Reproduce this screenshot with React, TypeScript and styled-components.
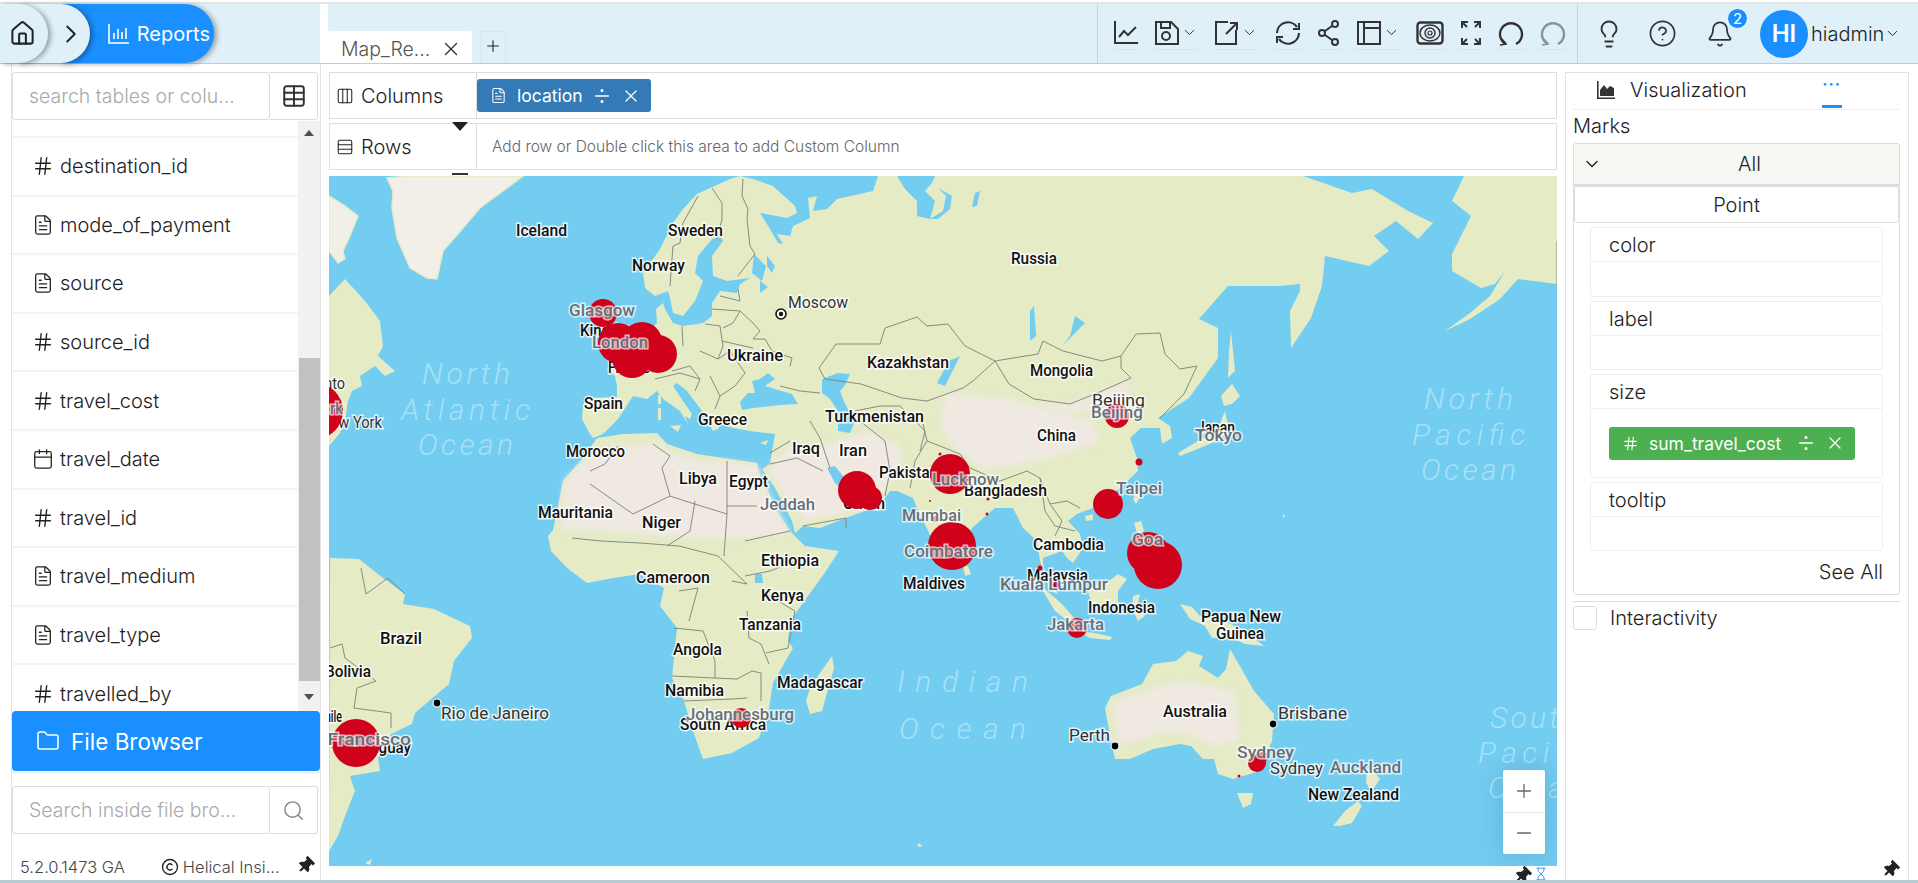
import React from "react";
import styled, { createGlobalStyle } from "styled-components";
import {
  Bell,
  Calendar,
  ChevronDown,
  ChevronRight,
  CircleHelp,
  Columns3,
  Copyright,
  Divide,
  FileText,
  Folder,
  Hash,
  Hourglass,
  House,
  Lightbulb,
  Minus,
  Plus,
  Rows3,
  Search,
  Table,
  X,
} from "lucide-react";
import { FaThumbtack } from "react-icons/fa";

const FONT = `Inter, "Open Sans", "Liberation Sans", sans-serif`;

const fields = [
  { name: "destination_id", kind: "hash" },
  { name: "mode_of_payment", kind: "file" },
  { name: "source", kind: "file" },
  { name: "source_id", kind: "hash" },
  { name: "travel_cost", kind: "hash" },
  { name: "travel_date", kind: "date" },
  { name: "travel_id", kind: "hash" },
  { name: "travel_medium", kind: "file" },
  { name: "travel_type", kind: "file" },
  { name: "travelled_by", kind: "hash" },
];

// map geometry, in page pixels (the svg viewBox starts at the map's corner)
const LAND = [
  // eurasia
  "590,433 582,418 583,405 587,397 617,396 617,385 615,375 607,367 625,362 640,340 650,328 657,322 656,308 663,302 668,290 655,295 645,287 643,272 660,248 673,222 683,208 697,193 710,187 730,178 740,175 753,178 773,185 795,205 797,212 787,217 760,212 770,228 778,242 783,243 777,233 790,235 793,225 810,217 808,197 817,195 813,210 827,208 837,198 873,190 878,175 1303,175 1352,192 1372,188 1408,210 1433,222 1418,238 1396,220 1374,235 1389,250 1369,265 1325,255 1322,285 1311,317 1291,347 1290,310 1300,290 1300,283 1279,285 1228,285 1199,318 1218,327 1218,357 1189,397 1158,417 1170,425 1172,437 1162,443 1160,427 1141,427 1130,437 1137,457 1138,470 1120,487 1093,507 1077,513 1068,520 1080,533 1083,547 1073,562 1067,557 1062,550 1043,557 1043,563 1047,577 1058,593 1050,590 1040,560 1037,540 1023,527 1013,507 995,507 972,527 958,560 950,567 933,540 917,507 913,497 897,490 890,490 883,500 873,507 843,518 820,527 803,525 795,532 792,520 775,487 762,468 770,463 772,450 775,433 750,430 733,427 720,423 718,428 713,430 702,410 687,390 677,382 673,385 683,400 692,413 690,418 685,415 688,423 680,410 663,398 657,390 647,398 633,395 618,418 603,433 593,437",
  // africa
  "563,480 583,457 597,437 623,433 657,432 667,443 697,453 723,457 757,462 760,475 768,490 780,515 790,530 805,545 839,550 824,573 803,602 790,620 788,640 793,647 773,682 769,707 759,737 732,752 703,758 693,730 684,700 672,677 674,657 677,627 660,605 664,587 640,573 613,577 587,582 567,567 551,550 548,535 553,529",
  // south america
  "330,557 359,558 383,577 405,593 403,603 434,608 470,625 472,637 454,660 449,683 415,712 412,723 391,733 378,757 380,770 350,775 355,790 345,815 338,835 329,850",
  // north america
  "329,295 345,278 365,300 380,320 383,345 378,355 395,370 385,375 375,365 360,375 362,385 352,390 348,400 345,420 340,432 329,445",
  // alaska
  "1464,175 1452,200 1471,215 1452,253 1452,270 1481,287 1495,283 1505,270 1490,295 1470,312 1445,330 1470,318 1500,298 1518,278 1557,283 1557,175",
  // madagascar
  "832,655 834,667 822,710 810,713 806,700 810,687 820,672",
  // japan, sakhalin
  "1221,395 1232,383 1240,395 1232,403 1224,405",
  "1225,410 1228,425 1222,438 1200,447 1180,455 1178,452 1198,440 1217,430",
  "1231,330 1235,370 1228,377 1229,350",
  // taiwan, hainan, sri lanka, luzon
  "1137,490 1141,494 1136,503 1133,498",
  "1085,515 1093,513 1093,519 1086,520",
  "963,565 968,565 971,573 965,575",
  "1134,522 1141,520 1144,530 1138,535",
  // sumatra, java, borneo, sulawesi
  "1040,585 1047,590 1062,603 1075,618 1070,622 1055,610",
  "1078,630 1095,632 1112,636 1110,639 1090,637",
  "1087,588 1105,583 1118,573 1127,578 1118,590 1118,603 1105,606 1092,603",
  "1133,595 1140,593 1137,605 1145,615 1138,620 1132,608",
  // papua
  "1180,603 1192,606 1200,615 1225,620 1245,630 1264,645 1245,643 1230,636 1212,637 1205,625 1190,618",
  // australia
  "1230,648 1241,667 1254,690 1274,713 1272,740 1260,770 1233,778 1218,773 1214,758 1203,758 1191,745 1180,743 1153,748 1130,758 1115,758 1111,740 1105,707 1111,695 1142,683 1153,663 1176,660 1188,650 1203,655 1199,665 1218,677 1226,668",
  "1237,792 1253,792 1251,803 1243,807",
  // new zealand
  "1367,767 1375,772 1380,778 1372,790 1366,782",
  "1333,825 1345,810 1358,800 1362,805 1352,822 1340,825",
  // islands
  "658,407 661,407 661,419 658,419",
  "658,394 661,394 661,403 658,403",
  "670,425 681,424 678,431",
  "760,442 768,439 766,444",
  "365,862 372,858 370,864",
  "918,842 923,845 918,846",
  "1283,513 1285,515 1283,517",
];

const ICY = [
  "410,175 523,175 503,190 480,207 463,227 443,250 437,278 427,277 410,267 397,237 392,207 393,190 387,177",
  "329,195 345,205 358,215 350,235 343,250 345,258 338,262 329,250",
  "1495,175 1557,175 1557,235 1530,215 1510,190",
];

const ARID = [
  "565,478 595,450 625,445 660,442 668,450 697,460 723,460 757,464 770,495 790,532 740,538 660,535 600,530 560,530",
  "775,458 790,445 815,448 835,440 870,430 900,445 900,470 888,487 843,513 805,520 782,490 768,470",
  "946,392 1010,398 1065,412 1095,422 1098,442 1040,460 985,468 957,450 940,425",
  "1113,700 1145,690 1180,680 1235,690 1240,740 1215,745 1180,730 1150,735 1118,745",
  "1038,398 1070,403 1102,390 1125,380 1130,392 1100,408 1060,412",
];

const SEA = [
  // baltic
  "668,290 670,297 673,312 683,315 695,300 703,280 695,272 698,255 712,238 720,235 723,240 712,255 713,275 727,280 750,277 740,283 737,292 720,290 712,302 712,315 703,322 683,325 673,322 665,308 663,302",
  // black sea, azov
  "740,401 748,392 755,392 752,380 760,378 768,372 775,378 765,385 775,388 792,393 798,403 780,404 753,407 742,409",
  // caspian
  "822,392 822,378 838,372 850,373 845,384 840,390 845,403 855,420 850,432 838,430 838,410 830,398",
  // persian gulf
  "827,467 835,465 847,480 845,490 835,482",
  // kara sea, ob
  "897,175 905,188 917,200 917,215 930,218 935,200 925,190 932,182 935,175",
  "938,187 946,195 943,210 930,218 938,218 950,208 952,195",
  "975,192 980,190 977,205 972,206",
  // lakes
  "754,253 766,265 762,280 752,272",
  "767,255 775,265 772,272 767,265",
  "1030,310 1034,305 1036,335 1030,340",
  "1075,315 1085,322 1062,345 1070,335",
  "760,280 768,286 760,292",
  "949,360 960,355 945,385 937,382",
  "755,573 762,573 763,582 755,582",
];

const BORDERS = [
  // europe
  "743,178 742,195 748,208 747,218 750,245 755,253 738,275",
  "712,187 722,202 722,218 717,238",
  "698,195 683,222 680,242 673,245 670,285",
  "682,325 683,345",
  "705,323 720,325 723,345 718,358",
  "712,308 740,310 753,322 760,330 753,338 765,338 772,350 792,357 790,365",
  "722,340 753,347",
  "740,310 733,322 723,327",
  "720,295 740,300 738,288",
  "700,350 718,358 730,350 745,372 735,385 720,395 715,408",
  "672,370 690,365 700,378 695,390",
  "655,378 680,372 700,378",
  "710,375 720,395",
  // russia / kazakhstan / mongolia
  "819,367 836,343 880,343 885,327 917,316 927,325 948,323 965,345 995,360",
  "995,360 1038,353 1043,340 1063,350 1102,360 1121,355 1136,333 1160,332 1165,353 1180,368 1197,365 1184,393 1160,417",
  "995,360 1009,383 1034,398 1070,403 1102,390 1131,377 1121,367 1121,355",
  "819,367 825,378 861,383 902,397 927,400 963,387 973,380 995,360",
  "780,385 800,390 820,392",
  "855,410 880,405 900,405 925,430 920,450",
  "860,420 885,440 890,470 885,495",
  "810,420 820,437 830,467",
  "790,440 770,452",
  "770,463 797,457 823,470",
  "803,525 846,517 846,527",
  "960,453 970,467 1000,480 1027,470 1040,477 1050,503 1067,500 1080,507",
  "923,423 927,440 915,460 910,487",
  "927,440 945,447 960,453",
  "1040,477 1045,510 1055,525 1075,530",
  "1050,503 1062,520 1055,535",
  // africa
  "653,443 670,455 662,467 670,495 685,500 727,513 727,460",
  "727,505 757,505",
  "670,495 633,513 590,483",
  "590,470 605,463 618,445",
  "727,513 724,555",
  "695,500 690,530 667,545",
  "572,537 601,540 640,542 679,545 718,555 747,583 732,580",
  "679,590 698,587 689,620",
  "674,627 703,630 715,660 715,677 672,675",
  "715,677 737,678 752,670 761,672 761,700",
  "747,610 749,637 761,643 769,663",
  "761,590 795,610 788,647 766,652",
  "684,700 732,698 747,697",
  "745,540 790,530",
  "745,575 770,570 795,560",
  // south america
  "330,647 342,643 345,657 376,680 357,687 354,707 391,712 391,727",
  "361,567 366,593 388,577 405,593",
  "1557,240 1557,285",
];

type Label = [string, number, number, number];

const COUNTRY: Label[] = [
  ["Iceland", 516, 567, 235],
  ["Sweden", 668, 723, 235],
  ["Norway", 632, 685, 270],
  ["Kingdom", 580, 640, 335],
  ["France", 608, 650, 372],
  ["Spain", 584, 623, 408],
  ["Morocco", 566, 625, 456],
  ["Libya", 679, 717, 483],
  ["Egypt", 729, 768, 486],
  ["Mauritania", 538, 613, 517],
  ["Niger", 642, 681, 527],
  ["Ukraine", 727, 783, 360],
  ["Greece", 698, 747, 424],
  ["Iraq", 792, 820, 453],
  ["Russia", 1011, 1057, 263],
  ["Kazakhstan", 867, 949, 367],
  ["Mongolia", 1030, 1093, 375],
  ["Turkmenistan", 825, 924, 421],
  ["China", 1037, 1076, 440],
  ["Iran", 839, 867, 455],
  ["Pakistan", 879, 938, 477],
  ["Bangladesh", 964, 1047, 495],
  ["Oman", 843, 885, 508],
  ["Cambodia", 1033, 1104, 549],
  ["Malaysia", 1027, 1088, 580],
  ["Maldives", 903, 965, 588],
  ["Indonesia", 1088, 1155, 612],
  ["Papua New", 1201, 1281, 621],
  ["Guinea", 1216, 1264, 638],
  ["Australia", 1163, 1227, 716],
  ["New Zealand", 1308, 1399, 799],
  ["Ethiopia", 761, 819, 565],
  ["Cameroon", 636, 710, 582],
  ["Kenya", 761, 804, 600],
  ["Tanzania", 739, 801, 629],
  ["Angola", 673, 722, 654],
  ["Namibia", 665, 724, 695],
  ["South Africa", 680, 766, 729],
  ["Madagascar", 777, 863, 687],
  ["Brazil", 380, 422, 643],
  ["Bolivia", 325, 371, 676],
  ["Uruguay", 355, 411, 752],
  ["Chile", 318, 342, 721],
  ["Japan", 1197, 1235, 432],
];

const CITY: Label[] = [
  ["Moscow", 788, 848, 307],
  ["Rio de Janeiro", 441, 549, 718],
  ["Perth", 1069, 1110, 740],
  ["Brisbane", 1278, 1347, 718],
  ["Sydney", 1270, 1323, 773],
  ["Beijing", 1092, 1145, 405],
  ["New York", 320, 382, 427],
  ["Toronto", 295, 345, 388],
];

const SPOT: Label[] = [
  ["Glasgow", 569, 635, 315],
  ["London", 592, 648, 347],
  ["Jeddah", 760, 815, 509],
  ["Lucknow", 932, 999, 484],
  ["Mumbai", 902, 961, 520],
  ["Coimbatore", 904, 993, 556],
  ["Beijing", 1091, 1143, 417],
  ["Taipei", 1116, 1162, 493],
  ["Tokyo", 1195, 1242, 440],
  ["Goa", 1132, 1163, 544],
  ["Kuala Lumpur", 1000, 1108, 589],
  ["Jakarta", 1047, 1104, 629],
  ["Johannesburg", 686, 794, 719],
  ["San Francisco", 290, 411, 744],
  ["Sydney", 1237, 1294, 757],
  ["Auckland", 1330, 1401, 772],
  ["New York", 280, 343, 413],
];

const OCEAN: Label[] = [
  ["North", 422, 510, 383],
  ["Atlantic", 401, 530, 419],
  ["Ocean", 418, 513, 454],
  ["North", 1424, 1513, 408],
  ["Pacific", 1412, 1525, 444],
  ["Ocean", 1421, 1516, 479],
  ["Indian", 897, 1028, 691],
  ["Ocean", 899, 1026, 738],
  ["South", 1490, 1578, 727],
  ["Pacific", 1478, 1591, 762],
  ["Ocean", 1488, 1583, 797],
];

const BUBBLES = [
  [315, 410, 28], [603, 312, 14], [618, 342, 20], [642, 341, 20], [632, 357, 20], [658, 353, 19],
  [857, 489, 19], [870, 497, 12], [950, 473, 20], [952, 545, 24], [1108, 503, 15],
  [1148, 552, 21], [1158, 564, 24], [1117, 415, 12], [1139, 461, 3.5], [1077, 627, 10],
  [741, 717, 10], [356, 742, 24], [1257, 762, 9], [1263, 756, 5], [940, 453, 1.5], [930, 500, 1],
  [988, 498, 1.5], [987, 513, 1.5], [1040, 567, 2.5], [1056, 584, 3], [1239, 775, 1.5], [935, 518, 3],
];

const DOTS = [[437, 702], [1115, 745], [1273, 723]];

const GlobalStyle = createGlobalStyle`
  html, body {
    margin: 0;
    padding: 0;
    background: #fff;
  }
  body {
    font-family: ${FONT};
    font-weight: 300;
    color: #222;
  }
  * {
    box-sizing: border-box;
  }
`;

const Page = styled.div`
  width: 1918px;
  height: 883px;
  overflow: hidden;
  display: flex;
  flex-direction: column;
  background: #fff;
  padding-top: 2px;
`;

const TopBar = styled.header`
  height: 62px;
  flex: none;
  display: flex;
  border-top: 2px solid #e4e4e4;
  border-bottom: 1px solid #c4ccd0;
`;

const CrumbArea = styled.div`
  width: 320px;
  background: #e0f0f9;
  display: flex;
`;

const Crumb = styled.div<{ $w: number; $blue?: boolean; $layer: number; $first?: boolean }>`
  width: ${(p) => p.$w}px;
  margin-left: ${(p) => (p.$first ? 0 : -30)}px;
  z-index: ${(p) => p.$layer};
  display: flex;
  align-items: center;
  justify-content: ${(p) => (p.$first ? "center" : "flex-end")};
  gap: 7px;
  padding-right: ${(p) => (p.$blue ? 4 : p.$first ? 3 : 4)}px;
  border-radius: 0 30px 30px 0;
  color: ${(p) => (p.$blue ? "#fff" : "#222")};
  background: ${(p) => (p.$blue ? "#1a8fff" : "#e0f0f9")};
  box-shadow: 3px 1px 5px rgba(0, 0, 0, 0.32);
  font-size: 20px;
  font-weight: 400;
`;

const TabArea = styled.div`
  flex: 1;
  margin-left: 8px;
  background: #e0f0f9;
  display: flex;
  align-items: flex-end;
`;

const Tab = styled.div`
  width: 144px;
  height: 32px;
  background: #fff;
  border-radius: 3px 3px 0 0;
  display: flex;
  align-items: center;
  justify-content: space-between;
  padding: 3px 10px 0 13px;
  font-size: 19.5px;
  color: #555;
  white-space: nowrap;
`;

const AddTab = styled.div`
  width: 26px;
  height: 32px;
  margin-left: 8px;
  border: 1px solid #d9e9f2;
  border-bottom: 0;
  display: flex;
  justify-content: center;
  padding-top: 5px;
  color: #222;
`;

const Tools = styled.div`
  width: 481px;
  flex: none;
  background: #e0f0f9;
  display: flex;
  align-items: center;
  gap: 16px;
  padding: 0 0 2px 16px;
  border-left: 1px solid #c4d2da;
  border-right: 1px solid #c4d2da;
`;

const ToolButton = styled.div<{ $w: number }>`
  width: ${(p) => p.$w}px;
  height: 30px;
  flex: none;
  display: flex;
  align-items: center;
  gap: 1px;
  color: #333;
  border-bottom: 1px solid #d8e2e8;
  padding-bottom: 3px;
  margin-top: 4px;
`;

const UserArea = styled.div`
  flex: none;
  width: 340px;
  background: #e0f0f9;
  display: flex;
  align-items: center;
  padding-left: 16px;
  color: #333;
`;

const UserIcon = styled.div<{ $right: number }>`
  position: relative;
  display: flex;
  margin-right: ${(p) => p.$right}px;
`;

const Badge = styled.span`
  position: absolute;
  top: -12px;
  right: -14px;
  width: 21px;
  height: 21px;
  border-radius: 50%;
  border: 1px solid #fff;
  background: #1a8fff;
  color: #fff;
  font-size: 15px;
  font-weight: 400;
  display: flex;
  align-items: center;
  justify-content: center;
`;

const Avatar = styled.div`
  width: 48px;
  height: 48px;
  border-radius: 50%;
  background: #1a8fff;
  color: #fff;
  font-size: 24px;
  font-weight: 600;
  display: flex;
  align-items: center;
  justify-content: center;
  margin-right: 3px;
`;

const UserName = styled.span`
  font-size: 20px;
  color: #222;
  display: flex;
  align-items: center;
`;

const Body = styled.div`
  flex: 1;
  min-height: 0;
  display: flex;
`;

const LeftColumn = styled.aside`
  width: 310px;
  flex: none;
  margin: 0 8px 0 11px;
  display: flex;
  flex-direction: column;
  border-left: 1px solid #e2e2e2;
  border-right: 1px solid #e2e2e2;
  padding-top: 8px;
`;

const SearchRow = styled.div<{ $mt?: number }>`
  height: 48px;
  flex: none;
  display: flex;
  margin-top: ${(p) => p.$mt ?? 0}px;
  padding-right: 2px;
`;

const SearchField = styled.div`
  flex: 1;
  border: 1px solid #dcdcdc;
  border-radius: 3px;
  color: #a9a9a9;
  font-size: 19.5px;
  display: flex;
  align-items: center;
  padding-left: 16px;
  white-space: nowrap;
`;

const SearchButton = styled.div`
  width: 48px;
  border: 1px solid #dcdcdc;
  border-left: 0;
  border-radius: 0 3px 3px 0;
  display: flex;
  align-items: center;
  justify-content: center;
  color: #333;
`;

const FieldArea = styled.div`
  height: 590px;
  flex: none;
  display: flex;
  overflow: hidden;
  margin-top: 1px;
`;

const FieldList = styled.div`
  flex: 1;
  padding-top: 15px;
  overflow: hidden;
`;

const FieldRow = styled.div`
  height: 58.6px;
  border-top: 2px solid #f4f4f4;
  display: flex;
  align-items: center;
  gap: 6px;
  padding-left: 20px;
  font-size: 20px;
  color: #222;
`;

const ScrollBar = styled.div`
  width: 22px;
  background: #f1f1f1;
  display: flex;
  flex-direction: column;
  align-items: center;
`;

const ScrollUp = styled.div`
  width: 0;
  height: 0;
  margin-top: 9px;
  border-left: 5px solid transparent;
  border-right: 5px solid transparent;
  border-bottom: 6px solid #505050;
`;

const ScrollDown = styled.div`
  width: 0;
  height: 0;
  margin-top: 13px;
  border-left: 5px solid transparent;
  border-right: 5px solid transparent;
  border-top: 6px solid #505050;
`;

const ScrollThumb = styled.div`
  width: 21px;
  height: 323px;
  margin-top: 222px;
  background: #c1c1c1;
`;

const FileBrowser = styled.div`
  height: 60px;
  flex: none;
  background: #1a8fff;
  border-radius: 4px;
  color: #fff;
  display: flex;
  align-items: center;
  gap: 11px;
  padding-left: 24px;
  font-size: 22.5px;
  font-weight: 400;
  box-shadow: 0 3px 0 #f2f2f2;
`;

const Footer = styled.div`
  flex: 1;
  display: flex;
  align-items: flex-start;
  padding: 23px 6px 0 8px;
  font-size: 16.5px;
  color: #444;
  white-space: nowrap;
`;

const FooterLegal = styled.span`
  margin-left: 36px;
  display: flex;
  align-items: center;
  gap: 4px;
  flex: 1;
`;

const Main = styled.main`
  width: 1228px;
  flex: none;
  display: flex;
  flex-direction: column;
  padding-top: 8px;
`;

const ShelfRow = styled.div<{ $mt?: number }>`
  position: relative;
  height: 47px;
  flex: none;
  margin-top: ${(p) => p.$mt ?? 0}px;
  border: 1px solid #dedede;
  display: flex;
`;

const ShelfLabel = styled.div`
  width: 147px;
  flex: none;
  border-right: 1px solid #dedede;
  display: flex;
  align-items: center;
  gap: 7px;
  padding-left: 6px;
  font-size: 20px;
  color: #222;
`;

const ShelfBody = styled.div<{ $pad: number }>`
  flex: 1;
  display: flex;
  align-items: center;
  padding-left: ${(p) => p.$pad}px;
  font-size: 15.5px;
  color: #666;
`;

const Chip = styled.div<{ $green?: boolean; $w: number; $text: number }>`
  width: ${(p) => p.$w}px;
  height: 33px;
  border-radius: 3px;
  background: ${(p) => (p.$green ? "#4caf50" : "#337ab7")};
  color: #fff;
  display: flex;
  align-items: center;
  padding-left: 13px;
  font-size: 17.5px;
  font-weight: 400;
  gap: 8px;
  span {
    width: ${(p) => p.$text}px;
    margin-left: 2px;
    white-space: nowrap;
  }
`;

const DropCaret = styled.div`
  position: absolute;
  left: 122px;
  top: -2px;
  width: 0;
  height: 0;
  border-left: 8px solid transparent;
  border-right: 8px solid transparent;
  border-top: 9px solid #222;
`;

const DropBar = styled.div`
  position: absolute;
  left: 122px;
  bottom: -6px;
  width: 16px;
  height: 2px;
  background: #333;
`;

const MapFrame = styled.div`
  position: relative;
  height: 690px;
  flex: none;
  margin-top: 6px;
  overflow: hidden;
  background: #72cdf1;
`;

const MapSvg = styled.svg`
  display: block;
  width: 100%;
  height: 100%;
`;

const CountryText = styled.text`
  font-family: Roboto, "Liberation Sans", sans-serif;
  font-size: 16px;
  font-weight: 500;
  fill: #111;
  paint-order: stroke;
  stroke: rgba(255, 255, 255, 0.8);
  stroke-width: 3px;
`;

const CityText = styled(CountryText)`
  font-weight: 400;
  fill: #333;
`;

const SpotText = styled(CountryText)`
  fill: #667079;
  stroke: rgba(255, 255, 255, 0.7);
`;

const OceanText = styled.text`
  font-family: Roboto, "Liberation Sans", sans-serif;
  font-size: 30px;
  font-weight: 300;
  font-style: italic;
  fill: #a9e0f6;
`;

const SoftShape = styled.polygon`
  fill: #efe9e2;
  filter: blur(3px);
`;

const ZoomBox = styled.div`
  position: absolute;
  right: 12px;
  bottom: 12px;
  width: 42px;
  height: 84px;
  border-radius: 2px;
  background: #fff;
  box-shadow: 0 0 24px rgba(40, 90, 120, 0.25);
  display: flex;
  flex-direction: column;
  color: #666;
`;

const ZoomButton = styled.div<{ $line?: boolean }>`
  flex: 1;
  display: flex;
  align-items: center;
  justify-content: center;
  border-top: ${(p) => (p.$line ? "1px solid #e6e6e6" : "0")};
`;

const MainFoot = styled.div`
  flex: 1;
  display: flex;
  justify-content: flex-end;
  gap: 3px;
  padding: 1px 9px 0 0;
  overflow: hidden;
  color: #222;
`;

const RightColumn = styled.aside`
  width: 344px;
  flex: none;
  margin: 8px 0 0 8px;
  border: 1px solid #e2e2e2;
  border-bottom: 0;
  padding: 0 8px 0 7px;
  display: flex;
  flex-direction: column;
  position: relative;
`;

const VizTabs = styled.div`
  height: 37px;
  flex: none;
  display: flex;
  align-items: center;
  gap: 15px;
  padding: 0 0 3px 24px;
  border-bottom: 1px solid #efefef;
  font-size: 20px;
  color: #222;
`;

const MoreTab = styled.div`
  margin-left: 60px;
  width: 20px;
  height: 37px;
  border-bottom: 3px solid #1a8fff;
  color: #1a8fff;
  display: flex;
  justify-content: center;
  padding-top: 3px;
  font-size: 16px;
  font-weight: 700;
  letter-spacing: 1px;
`;

const MarksTitle = styled.div`
  height: 33px;
  flex: none;
  display: flex;
  align-items: center;
  font-size: 20px;
  padding-bottom: 2px;
`;

const MarksBox = styled.div`
  height: 452px;
  flex: none;
  border: 1px solid #dcdcdc;
  border-radius: 3px;
  display: flex;
  flex-direction: column;
`;

const AllHeader = styled.div`
  height: 42px;
  flex: none;
  background: #f6f6f2;
  border-bottom: 2px solid #dcdcdc;
  display: flex;
  align-items: center;
  padding-left: 8px;
  font-size: 20px;
  span {
    margin-left: 136px;
  }
`;

const PointBar = styled.div`
  height: 37px;
  flex: none;
  border: 1px solid #dcdcdc;
  border-radius: 3px;
  display: flex;
  align-items: center;
  justify-content: center;
  font-size: 20px;
`;

const Properties = styled.div`
  display: flex;
  flex-direction: column;
  gap: 4px;
  padding: 4px 16px 0 16px;
`;

const PropertyCard = styled.div<{ $body: number }>`
  border: 1px solid #efefef;
  border-radius: 3px;
  display: flex;
  flex-direction: column;
  height: ${(p) => p.$body + 35}px;
`;

const PropertyName = styled.div`
  height: 34px;
  flex: none;
  border-bottom: 1px solid #efefef;
  display: flex;
  align-items: center;
  padding-left: 18px;
  font-size: 20px;
`;

const PropertyBody = styled.div`
  flex: 1;
  display: flex;
  align-items: center;
  padding-left: 18px;
`;

const SeeAll = styled.div`
  margin-top: 9px;
  padding-right: 16px;
  text-align: right;
  font-size: 20px;
`;

const InterLine = styled.div`
  margin-top: 6px;
  border-top: 1px solid #dcdcdc;
  padding-top: 4px;
  display: flex;
  align-items: center;
  gap: 13px;
  font-size: 20px;
`;

const CheckBox = styled.div`
  width: 24px;
  height: 24px;
  border: 1px solid #dcdcdc;
  border-radius: 3px;
`;

const CornerPin = styled.div`
  position: absolute;
  right: 9px;
  bottom: 2px;
  color: #222;
  display: flex;
`;

const BottomLine = styled.div`
  height: 3px;
  flex: none;
  background: #b7ccd0;
`;

const kindIcon = (kind: string) => {
  if (kind === "hash") return <Hash size={22} strokeWidth={1.5} />;
  if (kind === "date") return <Calendar size={22} strokeWidth={1.4} />;
  return <FileText size={22} strokeWidth={1.4} />;
};

// toolbar drawings
const Glyph = ({ w = 26, children }: { w?: number; children: React.ReactNode }) => (
  <svg width={w} height="26" viewBox={`0 0 ${w} 26`} fill="none" stroke="#333" strokeWidth="2">
    {children}
  </svg>
);

const Arc = ({ color = "#333" }: { color?: string }) => (
  <svg width="26" height="26" viewBox="0 0 26 26" fill="none" stroke={color} strokeWidth="2.4">
    <path d="M8 24 A11 11 0 1 1 18 24" />
    <path d="M4 19 l4 5 l-6 1" strokeWidth="1.6" />
  </svg>
);

const ReportsGlyph = () => (
  <svg width="22" height="22" viewBox="0 0 22 22" fill="none" stroke="#fff" strokeWidth="1.6">
    <path d="M1 1 V20 H21" />
    <path d="M6 16 V10 M10 16 V6 M14 16 V9 M18 16 V5" />
  </svg>
);

const AreaGlyph = () => (
  <svg width="18" height="18" viewBox="0 0 18 18" fill="#333">
    <path d="M0 0 h1.6 v16.4 H18 V18 H0 Z" />
    <path d="M3 15 V9 L7 4 L10 8 L13 5 L17 7 V15 Z" />
  </svg>
);

const MapView = () => (
  <MapSvg viewBox="329 175 1228 690" preserveAspectRatio="none">
    {ICY.map((p) => (
      <polygon key={p} points={p} fill="#f2efe8" stroke="#e4ebc5" strokeWidth="1.5" />
    ))}
    {LAND.map((p) => (
      <polygon key={p} points={p} fill="#e4ebc5" />
    ))}
    {ARID.map((p) => (
      <SoftShape key={p} points={p} />
    ))}
    {SEA.map((p) => (
      <polygon key={p} points={p} fill="#72cdf1" />
    ))}
    {BORDERS.map((p) => (
      <polyline key={p} points={p} fill="none" stroke="#7d8078" strokeWidth="0.9" />
    ))}
    {OCEAN.map(([t, a, b, y], i) => (
      <OceanText key={i} x={a} y={y} textLength={b - a} lengthAdjust="spacing">
        {t}
      </OceanText>
    ))}
    {COUNTRY.map(([t, a, b, y], i) => (
      <CountryText key={i} x={a} y={y} textLength={b - a} lengthAdjust="spacingAndGlyphs">
        {t}
      </CountryText>
    ))}
    {CITY.map(([t, a, b, y], i) => (
      <CityText key={i} x={a} y={y} textLength={b - a} lengthAdjust="spacingAndGlyphs">
        {t}
      </CityText>
    ))}
    {DOTS.map(([x, y]) => (
      <circle key={x} cx={x} cy={y} r="4" fill="#000" stroke="#fff" strokeWidth="1.2" />
    ))}
    <circle cx="781" cy="313" r="5" fill="#fff" stroke="#111" strokeWidth="1.6" />
    <circle cx="781" cy="313" r="2.2" fill="#111" />
    {BUBBLES.map(([x, y, r], i) => (
      <circle key={i} cx={x} cy={y} r={r} fill="#d0021b" />
    ))}
    {SPOT.map(([t, a, b, y], i) => (
      <SpotText key={i} x={a} y={y} textLength={b - a} lengthAdjust="spacingAndGlyphs">
        {t}
      </SpotText>
    ))}
  </MapSvg>
);

const App = () => {
  return (
    <Page>
      <GlobalStyle />
      <TopBar>
        <CrumbArea>
          <Crumb $w={48} $layer={3} $first>
            <House size={27} strokeWidth={1.8} />
          </Crumb>
          <Crumb $w={72} $layer={2}>
            <ChevronRight size={30} strokeWidth={1.5} />
          </Crumb>
          <Crumb $w={154} $layer={1} $blue>
            <ReportsGlyph />
            Reports
          </Crumb>
        </CrumbArea>
        <TabArea>
          <Tab>
            Map_Re...
            <X size={22} strokeWidth={1.5} color="#333" />
          </Tab>
          <AddTab>
            <Plus size={18} strokeWidth={1.5} />
          </AddTab>
        </TabArea>
        <Tools>
          <ToolButton $w={24}>
            <Glyph w={24}>
              <path d="M1 1 V23 H24" />
              <path d="M5 17 L10 11 L14 15 L22 7" />
            </Glyph>
          </ToolButton>
          <ToolButton $w={44}>
            <Glyph>
              <path d="M2 2 H17 L24 9 V24 H2 Z" />
              <path d="M7 2 V8 H16 V2" />
              <circle cx="12" cy="16" r="4" />
            </Glyph>
            <ChevronDown size={17} strokeWidth={1.4} />
          </ToolButton>
          <ToolButton $w={44}>
            <Glyph>
              <path d="M22 10 V24 H2 V2 H14" />
              <path d="M12 14 L22 4 M16 3 H23 V10" />
            </Glyph>
            <ChevronDown size={17} strokeWidth={1.4} />
          </ToolButton>
          <ToolButton $w={28}>
            <Glyph w={28}>
              <path d="M3 13 A11 11 0 0 1 23 7" strokeWidth="2.2" />
              <path d="M25 13 A11 11 0 0 1 5 19" strokeWidth="2.2" />
              <path d="M25 3 V9 H19 M3 23 V17 H9" />
            </Glyph>
          </ToolButton>
          <ToolButton $w={22}>
            <Glyph w={22}>
              <circle cx="4" cy="13" r="3" />
              <circle cx="17" cy="4" r="3" />
              <circle cx="17" cy="22" r="3" />
              <path d="M7 11 L14 6 M7 15 L14 20" />
            </Glyph>
          </ToolButton>
          <ToolButton $w={44}>
            <Glyph>
              <path d="M2 2 H24 V24 H2 Z M8 2 V24 M8 8 H24" />
            </Glyph>
            <ChevronDown size={17} strokeWidth={1.4} />
          </ToolButton>
          <ToolButton $w={28}>
            <Glyph w={28}>
              <rect x="1.5" y="2.5" width="25" height="21" rx="3" strokeWidth="2.4" />
              <ellipse cx="14" cy="13" rx="10" ry="8" strokeWidth="1.4" />
              <circle cx="14" cy="13" r="5" strokeWidth="1.4" />
              <circle cx="14" cy="13" r="2" strokeWidth="1.2" />
            </Glyph>
          </ToolButton>
          <ToolButton $w={22}>
            <Glyph w={22}>
              <path d="M2 2 L7 7 M20 2 L15 7 M2 24 L7 19 M20 24 L15 19" />
              <path d="M2 8 V2 H8 M14 2 H20 V8 M2 18 V24 H8 M14 24 H20 V18" />
            </Glyph>
          </ToolButton>
          <ToolButton $w={26}>
            <Arc />
          </ToolButton>
          <ToolButton $w={26}>
            <Arc color="#8a9298" />
          </ToolButton>
        </Tools>
        <UserArea>
          <UserIcon $right={24}>
            <Lightbulb size={30} strokeWidth={1.5} />
          </UserIcon>
          <UserIcon $right={29}>
            <CircleHelp size={29} strokeWidth={1.4} />
          </UserIcon>
          <UserIcon $right={26}>
            <Bell size={28} strokeWidth={1.5} />
            <Badge>2</Badge>
          </UserIcon>
          <Avatar>HI</Avatar>
          <UserName>
            hiadmin
            <ChevronDown size={17} strokeWidth={1.4} />
          </UserName>
        </UserArea>
      </TopBar>
      <Body>
        <LeftColumn>
          <SearchRow>
            <SearchField>search tables or colu...</SearchField>
            <SearchButton>
              <Table size={26} strokeWidth={1.8} />
            </SearchButton>
          </SearchRow>
          <FieldArea>
            <FieldList>
              {fields.map((f) => (
                <FieldRow key={f.name}>
                  {kindIcon(f.kind)}
                  {f.name}
                </FieldRow>
              ))}
            </FieldList>
            <ScrollBar>
              <ScrollUp />
              <ScrollThumb />
              <ScrollDown />
            </ScrollBar>
          </FieldArea>
          <FileBrowser>
            <Folder size={24} strokeWidth={1.5} />
            File Browser
          </FileBrowser>
          <SearchRow $mt={15}>
            <SearchField>Search inside file bro...</SearchField>
            <SearchButton>
              <Search size={23} strokeWidth={1.5} color="#888" />
            </SearchButton>
          </SearchRow>
          <Footer>
            5.2.0.1473 GA
            <FooterLegal>
              <Copyright size={18} strokeWidth={1.8} color="#222" />
              Helical Insi...
            </FooterLegal>
            <FaThumbtack size={17} color="#222" style={{ transform: "rotate(45deg)" }} />
          </Footer>
        </LeftColumn>
        <Main>
          <ShelfRow>
            <ShelfLabel>
              <Columns3 size={18} strokeWidth={1.4} />
              Columns
            </ShelfLabel>
            <ShelfBody $pad={0}>
              <Chip $w={174} $text={66}>
                <FileText size={17} strokeWidth={1.5} />
                <span>location</span>
                <Divide size={22} strokeWidth={1.4} />
                <X size={20} strokeWidth={1.5} />
              </Chip>
            </ShelfBody>
          </ShelfRow>
          <ShelfRow $mt={4}>
            <ShelfLabel>
              <Rows3 size={18} strokeWidth={1.4} />
              Rows
            </ShelfLabel>
            <ShelfBody $pad={15}>Add row or Double click this area to add Custom Column</ShelfBody>
            <DropCaret />
            <DropBar />
          </ShelfRow>
          <MapFrame>
            <MapView />
            <ZoomBox>
              <ZoomButton>
                <Plus size={22} strokeWidth={1.4} />
              </ZoomButton>
              <ZoomButton $line>
                <Minus size={22} strokeWidth={1.4} />
              </ZoomButton>
            </ZoomBox>
          </MapFrame>
          <MainFoot>
            <FaThumbtack size={17} style={{ transform: "rotate(45deg)" }} />
            <Hourglass size={14} strokeWidth={1.5} color="#1a8fff" />
          </MainFoot>
        </Main>
        <RightColumn>
          <VizTabs>
            <AreaGlyph />
            Visualization
            <MoreTab>···</MoreTab>
          </VizTabs>
          <MarksTitle>Marks</MarksTitle>
          <MarksBox>
            <AllHeader>
              <ChevronDown size={20} strokeWidth={1.5} />
              <span>All</span>
            </AllHeader>
            <PointBar>Point</PointBar>
            <Properties>
              <PropertyCard $body={35}>
                <PropertyName>color</PropertyName>
                <PropertyBody />
              </PropertyCard>
              <PropertyCard $body={34}>
                <PropertyName>label</PropertyName>
                <PropertyBody />
              </PropertyCard>
              <PropertyCard $body={69}>
                <PropertyName>size</PropertyName>
                <PropertyBody>
                  <Chip $green $w={246} $text={138}>
                    <Hash size={17} strokeWidth={1.5} />
                    <span>sum_travel_cost</span>
                    <Divide size={22} strokeWidth={1.4} />
                    <X size={20} strokeWidth={1.5} />
                  </Chip>
                </PropertyBody>
              </PropertyCard>
              <PropertyCard $body={34}>
                <PropertyName>tooltip</PropertyName>
                <PropertyBody />
              </PropertyCard>
            </Properties>
            <SeeAll>See All</SeeAll>
          </MarksBox>
          <InterLine>
            <CheckBox />
            Interactivity
          </InterLine>
          <CornerPin>
            <FaThumbtack size={17} style={{ transform: "rotate(45deg)" }} />
          </CornerPin>
        </RightColumn>
      </Body>
      <BottomLine />
    </Page>
  );
};

export default App;
